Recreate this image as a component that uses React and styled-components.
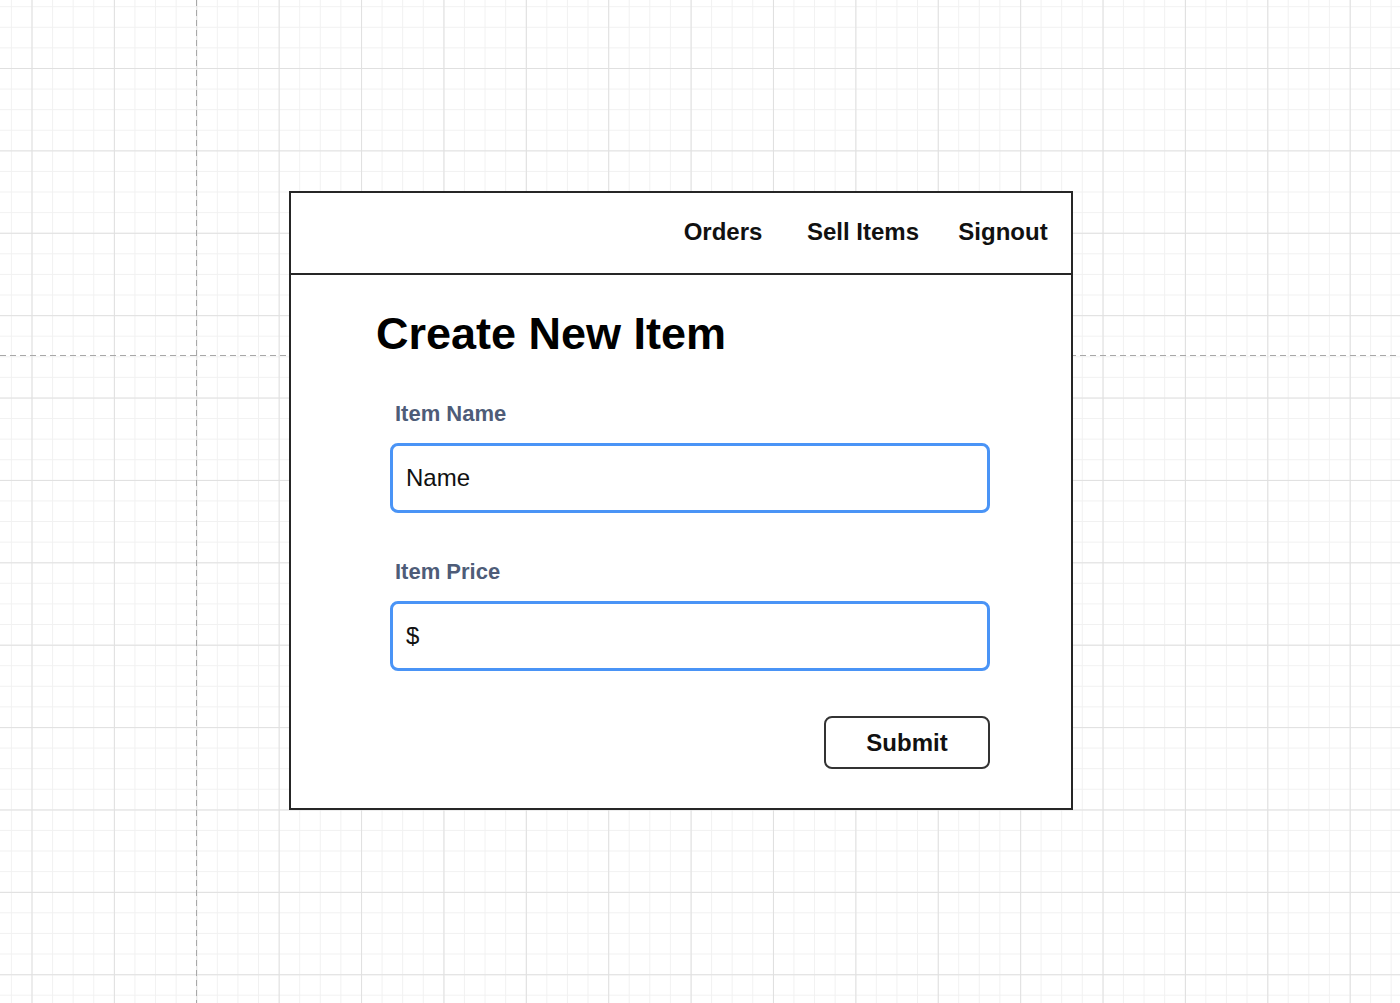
import React from "react";
import styled, { createGlobalStyle } from "styled-components";

const GlobalStyle = createGlobalStyle`
  html, body {
    margin: 0;
    padding: 0;
  }
  body {
    min-height: 1003px;
    font-family: "Liberation Sans", Arial, Helvetica, sans-serif;
    background-color: #ffffff;
    background-image:
      linear-gradient(to bottom, #a8a8a8 60%, transparent 60%),
      linear-gradient(to right, #a8a8a8 60%, transparent 60%),
      linear-gradient(to right, #e0e0e0 1px, transparent 1px),
      linear-gradient(to bottom, #e0e0e0 1px, transparent 1px),
      linear-gradient(to right, #f1f1f1 1px, transparent 1px),
      linear-gradient(to bottom, #f1f1f1 1px, transparent 1px);
    background-size:
      1px 10px,
      10px 1px,
      82.4px 82.4px,
      82.4px 82.4px,
      20.6px 20.6px,
      20.6px 20.6px;
    background-position:
      196px 0,
      0 355px,
      31.5px 68px,
      31.5px 68px,
      10.9px 6.2px,
      10.9px 6.2px;
    background-repeat:
      repeat-y,
      repeat-x,
      repeat,
      repeat,
      repeat,
      repeat;
  }
`;

const Canvas = styled.div`
  padding: 191px 0 0 289px;
`;

const Frame = styled.div`
  box-sizing: border-box;
  width: 784px;
  height: 619px;
  border: 2px solid #262626;
  background: #ffffff;
  display: flex;
  flex-direction: column;
`;

const Header = styled.header`
  box-sizing: border-box;
  height: 82px;
  border-bottom: 2px solid #262626;
  display: flex;
  justify-content: flex-end;
  align-items: center;
  padding-bottom: 2px;
`;

const NavLink = styled.a`
  width: 140px;
  text-align: center;
  font-size: 24px;
  font-weight: 700;
  line-height: 28px;
  color: #111111;
  text-decoration: none;
  cursor: pointer;
  &:last-child {
    margin-right: -2px;
  }
`;

const Content = styled.main`
  padding: 32px 0 0 85px;
  display: flex;
  flex-direction: column;
`;

const Title = styled.h1`
  margin: 0;
  font-size: 45px;
  line-height: 54px;
  font-weight: 700;
  color: #000000;
`;

const Form = styled.form`
  margin: 40px 0 0 14px;
  width: 600px;
  display: flex;
  flex-direction: column;
`;

const Field = styled.div`
  display: flex;
  flex-direction: column;
  margin-top: ${(p) => (p.$first ? "0" : "46px")};
`;

const Label = styled.label`
  padding-left: 5px;
  font-size: 22px;
  line-height: 25px;
  font-weight: 700;
  color: #4e5c78;
`;

const InputBox = styled.div`
  box-sizing: border-box;
  margin-top: 17px;
  height: 70px;
  border: 3px solid #4a94f6;
  border-radius: 8px;
  padding: 0 13px;
  display: flex;
  align-items: center;
  font-size: 24px;
  color: #111111;
  background: #ffffff;
`;

const Actions = styled.div`
  display: flex;
  justify-content: flex-end;
  margin-top: 45px;
`;

const SubmitButton = styled.button`
  box-sizing: border-box;
  width: 166px;
  height: 53px;
  border: 2px solid #333333;
  border-radius: 8px;
  background: #ffffff;
  font-family: "Liberation Sans", Arial, Helvetica, sans-serif;
  font-size: 24px;
  font-weight: 700;
  color: #111111;
  cursor: pointer;
`;

export default function App() {
  return (
    <>
      <GlobalStyle />
      <Canvas>
        <Frame>
          <Header>
            <NavLink>Orders</NavLink>
            <NavLink>Sell Items</NavLink>
            <NavLink>Signout</NavLink>
          </Header>
          <Content>
            <Title>Create New Item</Title>
            <Form onSubmit={(e) => e.preventDefault()}>
              <Field $first>
                <Label>Item Name</Label>
                <InputBox>Name</InputBox>
              </Field>
              <Field>
                <Label>Item Price</Label>
                <InputBox>$</InputBox>
              </Field>
              <Actions>
                <SubmitButton type="submit">Submit</SubmitButton>
              </Actions>
            </Form>
          </Content>
        </Frame>
      </Canvas>
    </>
  );
}
